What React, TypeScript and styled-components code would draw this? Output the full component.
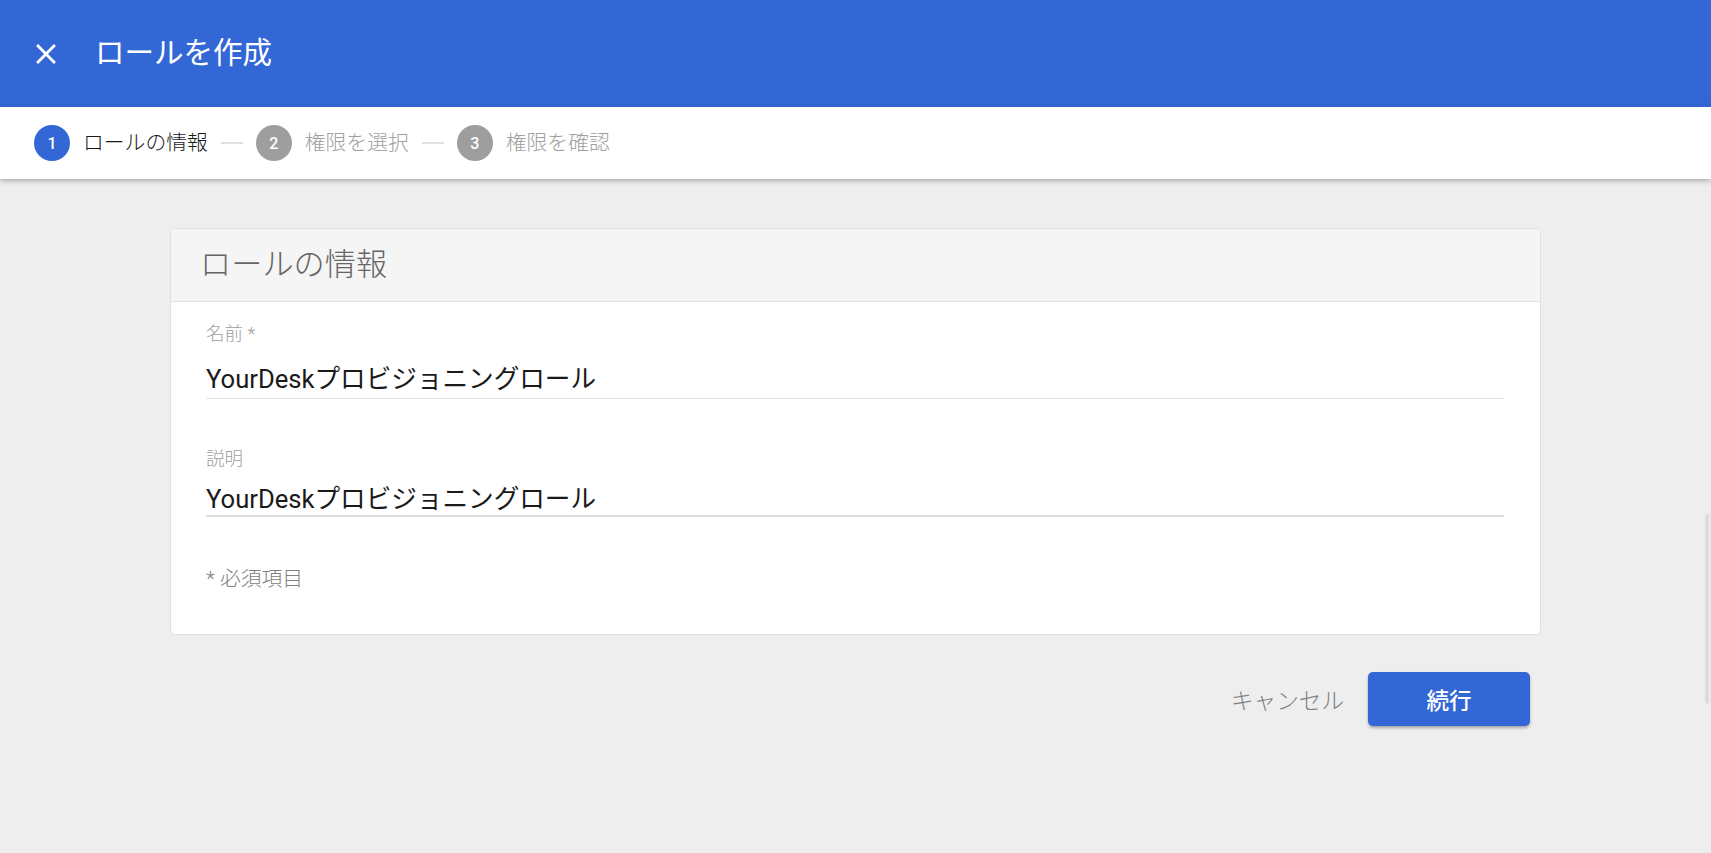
import React from "react";
import styled, { createGlobalStyle } from "styled-components";

const GlobalStyle = createGlobalStyle`
  html, body {
    margin: 0;
    padding: 0;
    background: #eeeeee;
    font-family: Roboto, "Noto Sans CJK JP", sans-serif;
  }
  * { box-sizing: border-box; }
`;

const Page = styled.div`
  position: relative;
  min-height: 853px;
  background: #eeeeee;
  display: flex;
  flex-direction: column;
  overflow: hidden;
`;

const AppBar = styled.header`
  height: 107px;
  background: #3367d6;
  display: flex;
  align-items: center;
  padding-left: 29px;
  gap: 32px;
  color: #ffffff;
`;

const CloseButton = styled.button`
  width: 34px;
  height: 34px;
  padding: 0;
  border: none;
  background: transparent;
  color: #ffffff;
  display: flex;
  align-items: center;
  justify-content: center;
  cursor: pointer;
`;

const Title = styled.h1`
  margin: 0;
  font-size: 29.5px;
  font-weight: 400;
  line-height: 1;
  letter-spacing: 0;
`;

const Stepper = styled.nav`
  position: relative;
  z-index: 1;
  height: 72px;
  background: #ffffff;
  display: flex;
  align-items: center;
  padding-left: 34px;
  gap: 13px;
  box-shadow: 0 2px 5px rgba(0, 0, 0, 0.28);
`;

const StepCircle = styled.span<{ $active?: boolean }>`
  width: 36px;
  height: 36px;
  border-radius: 50%;
  background: ${(p) => (p.$active ? "#3367d6" : "#9e9e9e")};
  color: #ffffff;
  display: flex;
  align-items: center;
  justify-content: center;
  font-family: Roboto, sans-serif;
  font-size: 16px;
  font-weight: 500;
`;

const StepLabel = styled.span<{ $active?: boolean }>`
  font-size: 20.8px;
  font-weight: 300;
  color: ${(p) => (p.$active ? "#1a1a1a" : "#a0a0a0")};
  line-height: 1;
`;

const StepConnector = styled.span`
  width: 22px;
  height: 2px;
  background: #e0e0e0;
`;

const Main = styled.main`
  padding-top: 49px;
  display: flex;
  flex-direction: column;
  align-items: center;
`;

const Container = styled.div`
  width: 1371px;
  display: flex;
  flex-direction: column;
`;

const Card = styled.section`
  background: #ffffff;
  border: 1px solid #e0e0e0;
  border-radius: 5px;
  overflow: hidden;
`;

const CardHeader = styled.div`
  height: 73px;
  background: #f5f5f5;
  border-bottom: 1px solid #e0e0e0;
  display: flex;
  align-items: center;
  padding-left: 29px;
`;

const CardTitle = styled.h2`
  margin: 0;
  font-size: 31.2px;
  font-weight: 300;
  color: #666666;
  line-height: 1;
`;

const CardBody = styled.div`
  padding: 20px 36px 42px 35px;
  display: flex;
  flex-direction: column;
`;

const Field = styled.label<{ $gap: number }>`
  display: flex;
  flex-direction: column;
  margin-bottom: ${(p) => p.$gap}px;
`;

const FieldLabel = styled.span`
  font-size: 18.5px;
  font-weight: 300;
  line-height: 24px;
  color: #a0a0a0;
`;

const FieldInput = styled.input<{ $thick?: boolean; $top: number; $pad: number }>`
  margin-top: ${(p) => p.$top}px;
  font-family: Roboto, "Noto Sans CJK JP", sans-serif;
  font-size: 25.6px;
  font-weight: 400;
  line-height: 32px;
  height: ${(p) => 32 + p.$pad + (p.$thick ? 2 : 1)}px;
  padding: 0 0 ${(p) => p.$pad}px 0;
  color: #1a1a1a;
  border: none;
  border-bottom: ${(p) => (p.$thick ? "2px solid #dcdcdc" : "1px solid #e0e0e0")};
  outline: none;
  background: transparent;
  width: 100%;
`;

const RequiredNote = styled.p`
  margin: 0;
  font-size: 20.8px;
  font-weight: 300;
  line-height: 26px;
  color: #808080;
`;

const Actions = styled.div`
  margin-top: 37px;
  display: flex;
  justify-content: flex-end;
  align-items: center;
  gap: 12px;
  padding-right: 11px;
`;

const TextButton = styled.button`
  border: none;
  background: transparent;
  font-family: Roboto, "Noto Sans CJK JP", sans-serif;
  font-size: 22.6px;
  font-weight: 300;
  color: #808080;
  padding: 0 12px;
  height: 54px;
  cursor: pointer;
`;

const PrimaryButton = styled.button`
  width: 162px;
  height: 54px;
  border: none;
  border-radius: 5px;
  background: #3367d6;
  color: #ffffff;
  font-family: Roboto, "Noto Sans CJK JP", sans-serif;
  font-size: 22.6px;
  font-weight: 500;
  box-shadow: 0 2px 3px rgba(0, 0, 0, 0.3);
  cursor: pointer;
`;

const DrawerEdge = styled.div`
  position: absolute;
  right: 0;
  top: 515px;
  width: 4px;
  height: 188px;
  border-left: 1px solid #d4d4d4;
  background: #e8e8e8;
  box-shadow: -1px 0 3px rgba(0, 0, 0, 0.12);
`;

const CloseIcon = () => (
  <svg width="34" height="34" viewBox="0 0 24 24" aria-hidden="true">
    <path
      fill="currentColor"
      d="M19 6.41L17.59 5 12 10.59 6.41 5 5 6.41 10.59 12 5 17.59 6.41 19 12 13.41 17.59 19 19 17.59 13.41 12z"
    />
  </svg>
);

const steps = ["ロールの情報", "権限を選択", "権限を確認"];

export default function App() {
  return (
    <>
      <GlobalStyle />
      <Page>
        <AppBar>
          <CloseButton aria-label="閉じる">
            <CloseIcon />
          </CloseButton>
          <Title>ロールを作成</Title>
        </AppBar>
        <Stepper>
          {steps.map((s, i) => (
            <React.Fragment key={s}>
              {i > 0 && <StepConnector />}
              <StepCircle $active={i === 0}>{i + 1}</StepCircle>
              <StepLabel $active={i === 0}>{s}</StepLabel>
            </React.Fragment>
          ))}
        </Stepper>
        <Main>
          <Container>
            <Card>
              <CardHeader>
                <CardTitle>ロールの情報</CardTitle>
              </CardHeader>
              <CardBody>
                <Field $gap={48}>
                  <FieldLabel>名前 *</FieldLabel>
                  <FieldInput
                    $top={14}
                    $pad={6}
                    defaultValue="YourDeskプロビジョニングロール"
                  />
                </Field>
                <Field $gap={49}>
                  <FieldLabel>説明</FieldLabel>
                  <FieldInput
                    $top={9}
                    $pad={3}
                    $thick
                    defaultValue="YourDeskプロビジョニングロール"
                  />
                </Field>
                <RequiredNote>* 必須項目</RequiredNote>
              </CardBody>
            </Card>
            <Actions>
              <TextButton>キャンセル</TextButton>
              <PrimaryButton>続行</PrimaryButton>
            </Actions>
          </Container>
        </Main>
        <DrawerEdge />
      </Page>
    </>
  );
}
